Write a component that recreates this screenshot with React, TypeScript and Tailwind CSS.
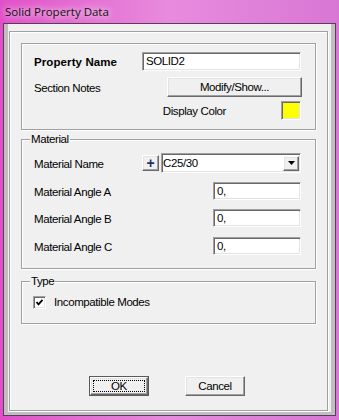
import React from "react";

// classic win32 bevels
const etched = "border border-[#a0a0a0] shadow-[inset_1px_1px_0_#fff,1px_1px_0_#fff]";
const sunken =
  "border border-t-[#a0a0a0] border-l-[#a0a0a0] border-r-white border-b-white shadow-[inset_1px_1px_0_#696969,inset_-1px_-1px_0_#e3e3e3]";
const raised =
  "border border-t-white border-l-white border-r-[#696969] border-b-[#696969] shadow-[inset_-1px_-1px_0_#a0a0a0,inset_1px_1px_0_#e3e3e3] bg-[#f0f0f0]";

interface GroupProps {
  title?: string;
  className?: string;
  children: React.ReactNode;
}

const Group: React.FC<GroupProps> = ({ title, className = "", children }) => (
  <div className={`relative ${etched} ${className}`}>
    {title && (
      <span className="absolute left-[8px] top-[-7px] bg-[#f0f0f0] px-[1px] leading-[13px]">
        {title}
      </span>
    )}
    {children}
  </div>
);

const Label: React.FC<{ children: React.ReactNode; bold?: boolean }> = ({ children, bold }) => (
  <span className={`pt-[2px] leading-[13px] ${bold ? "font-bold tracking-[0.1px]" : ""}`}>{children}</span>
);

const TextBox: React.FC<{ value: string; className?: string }> = ({ value, className = "" }) => (
  <div className={`flex items-center bg-white pl-[3px] ${sunken} ${className}`}>
    <span className="leading-[13px]">{value}</span>
  </div>
);

const App: React.FC = () => {
  return (
    <div className="w-[339px] h-[420px] flex flex-col overflow-hidden bg-linear-to-r from-[#e04ec8] via-[#e88bde] to-[#d877d4] font-['Liberation_Sans',Arial,sans-serif] text-[11.5px] tracking-[-0.4px] text-black">
      {/* title bar */}
      <div className="h-[23px] shrink-0 flex items-center pl-[5px]">
        <span className="font-['Open_Sans','Noto_Sans',sans-serif] text-[11.5px] tracking-normal text-[#111] [text-shadow:0_0_6px_rgba(255,255,255,0.95),0_0_12px_rgba(255,255,255,0.7)]">
          Solid Property Data
        </span>
      </div>

      {/* frame */}
      <div className="mx-[3px] mb-[4px] flex-1 flex flex-col border border-[#5e3a5c] bg-[#bfbfbf] px-[4px] pb-[3px]">
        <div className="flex-1 flex flex-col bg-[#f0f0f0] pl-[1px] pr-[3px] pt-[7px] pb-[1px]">
          <div className={`flex-1 flex flex-col px-[11px] pt-[11px] ${etched}`}>
            {/* property */}
            <Group className="pl-[12px] pr-[14px] pt-[8px] pb-[9px]">
              <div className="flex items-center justify-between">
                <Label bold>Property Name</Label>
                <TextBox value="SOLID2" className="w-[159px] h-[19px]" />
              </div>
              <div className="flex items-center justify-between mt-[6px]">
                <Label>Section Notes</Label>
                <button className={`w-[135px] h-[20px] -mr-[1px] flex items-center justify-center ${raised}`}>
                  <span className="leading-[13px]">Modify/Show...</span>
                </button>
              </div>
              <div className="flex items-center justify-end mt-[4px]">
                <Label>Display Color</Label>
                <div className={`ml-[55px] w-[20px] h-[19px] bg-[#ffff00] ${sunken}`} />
              </div>
            </Group>

            {/* material */}
            <Group title="Material" className="mt-[9px] pl-[12px] pr-[14px] pt-[13px] pb-[13px]">
              <div className="flex items-center">
                <Label>Material Name</Label>
                <button className={`ml-auto w-[17px] h-[16px] flex items-center justify-center ${raised}`}>
                  <span className="text-[14px] font-bold leading-none text-[#1c3270] -mt-[1px]">+</span>
                </button>
                <div className={`ml-[2px] w-[140px] h-[20px] flex items-center bg-white ${sunken}`}>
                  <span className="flex-1 pl-[1px] leading-[13px]">C25/30</span>
                  <div className={`w-[16px] h-[15px] mr-[1px] flex items-center justify-center ${raised}`}>
                    <svg width="7" height="4" viewBox="0 0 7 4">
                      <polygon points="0,0 7,0 3.5,4" fill="#000" />
                    </svg>
                  </div>
                </div>
              </div>
              <div className="flex items-center justify-between mt-[9px]">
                <Label>Material Angle A</Label>
                <TextBox value="0," className="w-[88px] h-[18px]" />
              </div>
              <div className="flex items-center justify-between mt-[9px]">
                <Label>Material Angle B</Label>
                <TextBox value="0," className="w-[88px] h-[18px]" />
              </div>
              <div className="flex items-center justify-between mt-[10px]">
                <Label>Material Angle C</Label>
                <TextBox value="0," className="w-[88px] h-[18px]" />
              </div>
            </Group>

            {/* type */}
            <Group title="Type" className="mt-[12px] pl-[11px] pt-[14px] pb-[14px]">
              <div className="flex items-center h-[13px]">
                <div className={`w-[13px] h-[13px] flex items-center justify-center bg-white ${sunken}`}>
                  <svg width="9" height="9" viewBox="0 0 9 9">
                    <polyline points="1.5,4 3.5,6.3 7.5,1.8" fill="none" stroke="#000" strokeWidth="1.8" />
                  </svg>
                </div>
                <span className="ml-[8px] leading-[13px]">Incompatible Modes</span>
              </div>
            </Group>

            {/* buttons */}
            <div className="flex mt-[52px] pl-[68px] gap-[36px]">
              <div className="w-[60px] h-[20px] border border-[#5a5a5a]">
                <button className={`w-full h-full flex items-center justify-center p-[2px] ${raised}`}>
                  <span className="w-full h-full flex items-center justify-center border border-dotted border-black leading-[13px]">
                    OK
                  </span>
                </button>
              </div>
              <button className={`w-[60px] h-[20px] flex items-center justify-center ${raised}`}>
                <span className="leading-[13px]">Cancel</span>
              </button>
            </div>
          </div>
        </div>
      </div>
    </div>
  );
};

export default App;
